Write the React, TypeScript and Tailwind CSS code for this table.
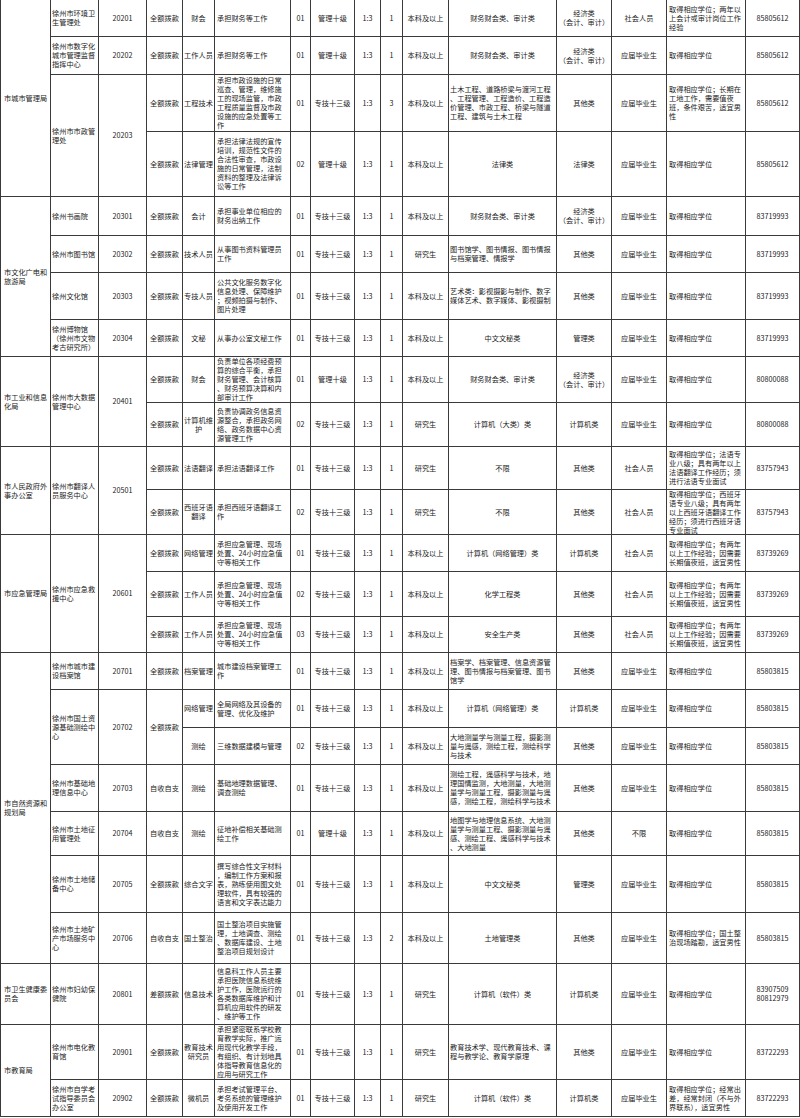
import React from "react";

type Cell = { t: string; left?: boolean; rs?: number };

const L = (t: string, rs?: number): Cell => ({ t, left: true, rs });
const M = (t: string, rs?: number): Cell => ({ t, rs });

const ECON = "经济类\n（会计、审计）";
const DEG = "取得相应学位";
const EMERG = "承担应急管理、现场处置、24小时应急值守等相关工作";
const EMERG_REQ = "取得相应学位；有两年以上工作经验；因需要长期值夜班，适宜男性";

const rows: Cell[][] = [
  [L("市城市管理局", 4), L("徐州市环境卫生管理处"), M("20201"), M("全额拨款"), M("财会"), L("承担财务等工作"), M("01"), M("管理十级"), M("1:3"), M("1"), M("本科及以上"), M("财务财会类、审计类"), M(ECON), M("社会人员"), L("取得相应学位；两年以上会计或审计岗位工作经验"), M("85805612")],
  [L("徐州市数字化城市管理监督指挥中心"), M("20202"), M("全额拨款"), M("工作人员"), L("承担财务等工作"), M("01"), M("管理十级"), M("1:3"), M("1"), M("本科及以上"), M("财务财会类、审计类"), M(ECON), M("应届毕业生"), L(DEG), M("85805612")],
  [L("徐州市市政管理处", 2), M("20203", 2), M("全额拨款"), M("工程技术"), L("承担市政设施的日常巡查、管理，维修施工的现场监管，市政工程质量监督及市政设施的应急处置等工作"), M("01"), M("专技十三级"), M("1:3"), M("3"), M("本科及以上"), L("土木工程、道路桥梁与渡河工程、工程管理、工程造价、工程造价管理、市政工程、桥梁与隧道工程、建筑与土木工程"), M("其他类"), M("应届毕业生"), L("取得相应学位；长期在\n工地工作，需要值夜\n班，条件艰苦，适宜男\n性"), M("85805612")],
  [M("全额拨款"), M("法律管理"), L("承担法律法规的宣传培训，规范性文件的合法性审查，市政设施的日常管理，法制资料的整理及法律诉讼等工作"), M("02"), M("管理十级"), M("1:3"), M("1"), M("本科及以上"), M("法律类"), M("法律类"), M("应届毕业生"), L(DEG), M("85805612")],

  [L("市文化广电和旅游局", 4), L("徐州书画院"), M("20301"), M("全额拨款"), M("会计"), L("承担事业单位相应的财务出纳工作"), M("01"), M("专技十三级"), M("1:3"), M("1"), M("本科及以上"), M("财务财会类、审计类"), M(ECON), M("应届毕业生"), L(DEG), M("83719993")],
  [L("徐州市图书馆"), M("20302"), M("全额拨款"), M("技术人员"), L("从事图书资料管理员工作"), M("01"), M("专技十三级"), M("1:3"), M("1"), M("研究生"), L("图书馆学、图书情报、图书情报与档案管理、情报学"), M("其他类"), M("应届毕业生"), L(DEG), M("83719993")],
  [L("徐州文化馆"), M("20303"), M("全额拨款"), M("专技人员"), L("公共文化服务数字化信息处理、保障维护；视频拍摄与制作、图片处理"), M("01"), M("专技十三级"), M("1:3"), M("1"), M("本科及以上"), L("艺术类：影视摄影与制作、数字媒体艺术、数字媒体、影视摄制"), M("其他类"), M("应届毕业生"), L(DEG), M("83719993")],
  [L("徐州博物馆\n（徐州市文物考古研究所）"), M("20304"), M("全额拨款"), M("文秘"), L("从事办公室文秘工作"), M("01"), M("专技十三级"), M("1:3"), M("1"), M("本科及以上"), M("中文文秘类"), M("管理类"), M("应届毕业生"), L(DEG), M("83719993")],

  [L("市工业和信息化局", 2), L("徐州市大数据管理中心", 2), M("20401", 2), M("全额拨款"), M("财会"), L("负责单位各项经费预算的综合平衡，承担财务管理、会计核算、财务预算决算和内部审计工作"), M("01"), M("管理十级"), M("1:3"), M("1"), M("本科及以上"), M("财务财会类、审计类"), M(ECON), M("应届毕业生"), L(DEG), M("80800088")],
  [M("全额拨款"), M("计算机维护"), L("负责协调政务信息资源整合，承担政务网络、政务数据中心资源管理工作"), M("02"), M("专技十三级"), M("1:3"), M("1"), M("研究生"), M("计算机（大类）类"), M("计算机类"), M("应届毕业生"), L(DEG), M("80800088")],

  [L("市人民政府外事办公室", 2), L("徐州市翻译人员服务中心", 2), M("20501", 2), M("全额拨款"), M("法语翻译"), L("承担法语翻译工作"), M("01"), M("专技十三级"), M("1:3"), M("1"), M("研究生"), M("不限"), M("其他类"), M("社会人员"), L("取得相应学位；法语专业八级；具有两年以上法语翻译工作经历；须进行法语专业面试"), M("83757943")],
  [M("全额拨款"), M("西班牙语翻译"), L("承担西班牙语翻译工作"), M("02"), M("专技十三级"), M("1:3"), M("1"), M("研究生"), M("不限"), M("其他类"), M("社会人员"), L("取得相应学位；西班牙语专业八级；具有两年以上西班牙语翻译工作经历；须进行西班牙语专业面试"), M("83757943")],

  [L("市应急管理局", 3), L("徐州市应急救援中心", 3), M("20601", 3), M("全额拨款"), M("网络管理"), L(EMERG), M("01"), M("专技十三级"), M("1:3"), M("1"), M("本科及以上"), M("计算机（网络管理）类"), M("计算机类"), M("社会人员"), L(EMERG_REQ), M("83739269")],
  [M("全额拨款"), M("工作人员"), L(EMERG), M("02"), M("专技十三级"), M("1:3"), M("1"), M("本科及以上"), M("化学工程类"), M("其他类"), M("社会人员"), L(EMERG_REQ), M("83739269")],
  [M("全额拨款"), M("工作人员"), L(EMERG), M("03"), M("专技十三级"), M("1:3"), M("1"), M("本科及以上"), M("安全生产类"), M("其他类"), M("社会人员"), L(EMERG_REQ), M("83739269")],

  [L("市自然资源和规划局", 7), L("徐州市城市建设档案馆"), M("20701"), M("全额拨款"), M("档案管理"), L("城市建设档案管理工作"), M("01"), M("专技十三级"), M("1:3"), M("1"), M("本科及以上"), L("档案学、档案管理、信息资源管理、图书情报与档案管理、图书馆学"), M("其他类"), M("应届毕业生"), L(DEG), M("85803815")],
  [L("徐州市国土资源基础测绘中心", 2), M("20702", 2), M("全额拨款", 2), M("网络管理"), L("全局网络及其设备的管理、优化及维护"), M("01"), M("专技十三级"), M("1:3"), M("1"), M("本科及以上"), M("计算机（网络管理）类"), M("计算机类"), M("应届毕业生"), L(DEG), M("85803815")],
  [M("测绘"), L("三维数据建模与管理"), M("02"), M("专技十三级"), M("1:3"), M("1"), M("本科及以上"), L("大地测量学与测量工程，摄影测量与遥感，测绘工程，测绘科学与技术"), M("其他类"), M("应届毕业生"), L(DEG), M("85803815")],
  [L("徐州市基础地理信息中心"), M("20703"), M("自收自支"), M("测绘"), L("基础地理数据管理、调查测绘"), M("01"), M("专技十三级"), M("1:3"), M("1"), M("本科及以上"), L("测绘工程，遥感科学与技术，地理国情监测，大地测量，大地测量学与测量工程，摄影测量与遥感，测绘工程，测绘科学与技术"), M("其他类"), M("应届毕业生"), L(DEG), M("85803815")],
  [L("徐州市土地征用管理处"), M("20704"), M("自收自支"), M("测绘"), L("征地补偿相关基础测绘工作"), M("01"), M("管理十级"), M("1:3"), M("1"), M("本科及以上"), L("地图学与地理信息系统、大地测量学与测量工程、摄影测量与遥感、测绘工程、遥感科学与技术、大地测量"), M("其他类"), M("不限"), L(DEG), M("85803815")],
  [L("徐州市土地储备中心"), M("20705"), M("全额拨款"), M("综合文字"), L("撰写综合性文字材料，编制工作方案和报表，熟练使用图文处理软件，具有较强的语言和文字表达能力"), M("01"), M("专技十三级"), M("1:3"), M("1"), M("本科及以上"), M("中文文秘类"), M("管理类"), M("应届毕业生"), L(DEG), M("85803815")],
  [L("徐州市土地矿产市场服务中心"), M("20706"), M("自收自支"), M("国土整治"), L("国土整治项目实施管理，土地调查、测绘、数据库建设、土地整治项目规划设计"), M("01"), M("专技十三级"), M("1:3"), M("2"), M("本科及以上"), M("土地管理类"), M("其他类"), M("应届毕业生"), L("取得相应学位；国土整治现场踏勘，适宜男性"), M("85803815")],

  [L("市卫生健康委员会"), L("徐州市妇幼保健院"), M("20801"), M("差额拨款"), M("信息技术"), L("信息科工作人员主要承担医院信息系统维护工作，医院运行的各类数据库维护和计算机应用软件的研发、维护等工作"), M("01"), M("专技十三级"), M("1:3"), M("1"), M("研究生"), M("计算机（软件）类"), M("计算机类"), M("应届毕业生"), L(DEG), M("83907509\n80812979")],

  [L("市教育局", 2), L("徐州市电化教育馆"), M("20901"), M("全额拨款"), M("教育技术研究员"), L("承担紧密联系学校教育教学实际，推广运用现代化教学手段，有组织、有计划地具体指导教育信息化的应用与研究工作"), M("01"), M("专技十三级"), M("1:3"), M("1"), M("研究生"), L("教育技术学、现代教育技术、课程与教学论、教育学原理"), M("其他类"), M("应届毕业生"), L(DEG), M("83722293")],
  [L("徐州市自学考试指导委员会办公室"), M("20902"), M("全额拨款"), M("微机员"), L("承担考试管理平台、考务系统的管理维护及使用开发工作"), M("01"), M("专技十三级"), M("1:3"), M("1"), M("研究生"), M("计算机（软件）类"), M("计算机类"), M("应届毕业生"), L("取得相应学位；经常出差，经常封闭（不与外界联系），适宜男性"), M("83722293")],
];

const spanClass: Record<number, string> = {
  1: "",
  2: "row-span-2",
  3: "row-span-3",
  4: "row-span-4",
  7: "row-span-7",
};

// padding per column, so wrapping matches the sheet
const colPad = [
  "pl-[3px] pr-[1px]",
  "px-[1px]",
  "px-[1px]",
  "px-[1px]",
  "px-[1px]",
  "pl-[2px] pr-[4px]",
  "px-0",
  "px-[1px]",
  "px-0",
  "px-0",
  "px-[1px]",
  "px-[1px]",
  "px-[1px]",
  "px-[1px]",
  "pl-[2px] pr-[1px]",
  "px-[1px]",
];

// work out which column each cell lands in, accounting for row spans
function placeCells() {
  const busy = new Array(16).fill(0);
  const out: { c: Cell; col: number; key: string }[] = [];
  rows.forEach((row, ri) => {
    let col = 0;
    row.forEach((c, ci) => {
      while (col < 16 && busy[col] > 0) col++;
      out.push({ c, col, key: `${ri}-${ci}` });
      busy[col] = c.rs ?? 1;
      col++;
    });
    for (let i = 0; i < 16; i++) if (busy[i] > 0) busy[i]--;
  });
  return out;
}

const cells = placeCells();

export default function App() {
  return (
    <div className="w-[800px] h-[1118px] overflow-hidden bg-white">
      <div
        className="grid grid-cols-[50px_48px_48px_36px_32px_76px_20px_44px_26px_22px_46px_108px_55px_55px_79px_54px] grid-rows-[37px_38px_57px_65px_39px_37px_47px_37px_46px_44px_43px_45px_37px_45px_36px_37px_38px_37px_47px_44px_57px_51px_61px_55px_37px] border-l border-[#3a3a3a] text-[7.2px] leading-[9px] text-[#222] [line-break:anywhere]"
        style={{ fontFamily: '"Noto Sans CJK SC", "Noto Sans", sans-serif' }}
      >
        {cells.map(({ c, col, key }) => (
          <div
            key={key}
            className={`flex items-center border-r border-b border-[#3a3a3a] ${colPad[col]} ${
              c.left ? "justify-start text-left" : "justify-center text-center"
            } ${spanClass[c.rs ?? 1]}`}
          >
            <span className="whitespace-pre-line">{c.t}</span>
          </div>
        ))}
      </div>
    </div>
  );
}
